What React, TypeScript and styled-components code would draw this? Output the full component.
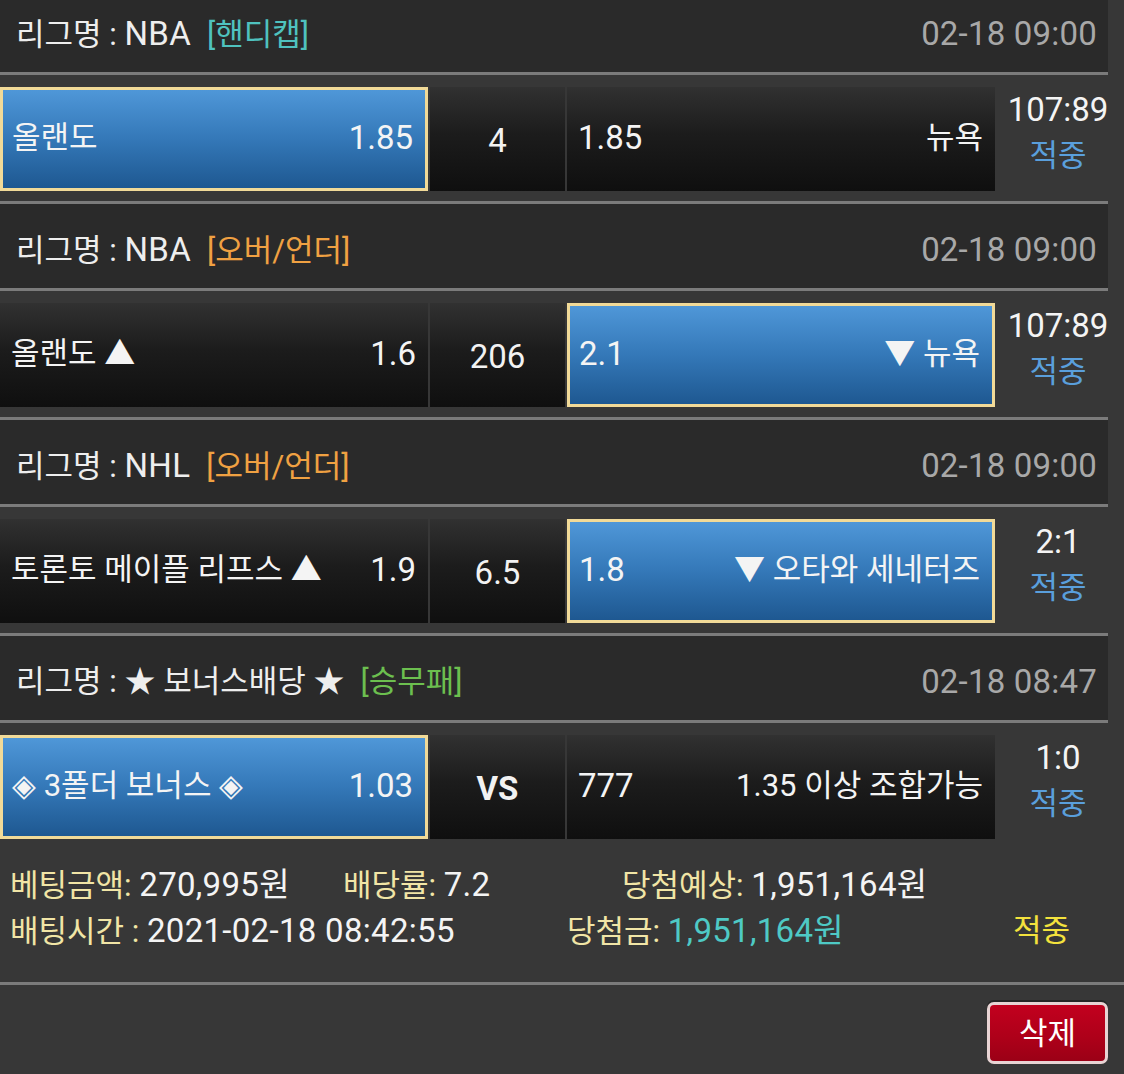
import React from "react";
import styled, { createGlobalStyle, css } from "styled-components";

const GlobalStyle = createGlobalStyle`
  html, body {
    margin: 0;
    padding: 0;
    background: #373737;
  }
  body {
    font-family: Roboto, "Noto Sans CJK KR", sans-serif;
    color: #f2f2f2;
    overflow: hidden;
  }
`;

const Page = styled.div`
  width: 1124px;
  margin-top: -12px;
  font-size: 31px;
`;

const LeagueHeader = styled.div`
  width: 1108px;
  height: 84px;
  box-sizing: border-box;
  padding: 6px 11px 0 16px;
  background: #2a2a2a;
  display: flex;
  align-items: center;
  justify-content: space-between;
  line-height: 1;
`;

const LeagueName = styled.span`
  color: #eeeeee;
  white-space: pre;
`;

const Latin = styled.span`
  font-size: 33px;
  letter-spacing: 0.3px;
`;

const tagColors: Record<string, string> = {
  handicap: "#4fc2bf",
  overunder: "#f0a142",
  winlose: "#6cbf4f",
};

const Tag = styled.span<{ $kind: string }>`
  color: ${(p) => tagColors[p.$kind]};
  margin-left: 16px;
`;

const Time = styled.span`
  color: #a8a8a8;
  font-size: 33px;
  letter-spacing: 0.2px;
`;

const Divider = styled.div<{ $full?: boolean }>`
  height: 3px;
  width: ${(p) => (p.$full ? "1124px" : "1108px")};
  background: #7b7b7b;
`;

const BetRow = styled.div`
  display: grid;
  grid-template-columns: 428px 135px 428px 1fr;
  column-gap: 2px;
  padding: 12px 0 10px;
  height: 104px;
  line-height: 1;
`;

const Pick = styled.div<{ $selected?: boolean }>`
  display: flex;
  align-items: center;
  justify-content: space-between;
  box-sizing: border-box;
  white-space: nowrap;
  color: #f4f4f4;
  ${(p) =>
    p.$selected
      ? css`
          border: 3px solid #f1da98;
          padding: 0 12px 4px 9px;
          background: linear-gradient(180deg, #4f97d8 0%, #3478b8 50%, #1e5891 100%);
        `
      : css`
          padding: 0 12px 4px 11px;
          background: linear-gradient(180deg, #313131 0%, #1c1c1c 45%, #0f0f0f 100%);
        `}
`;

const Odds = styled.span`
  font-size: 33px;
`;

const Handicap = styled.div<{ $bold?: boolean }>`
  display: flex;
  align-items: center;
  justify-content: center;
  padding-top: 2px;
  box-sizing: border-box;
  font-size: 33px;
  background: linear-gradient(180deg, #313131 0%, #1c1c1c 45%, #0f0f0f 100%);
  font-weight: ${(p) => (p.$bold ? 700 : 400)};
`;

const Result = styled.div`
  display: flex;
  flex-direction: column;
  align-items: center;
  justify-content: center;
  padding: 0 5px 12px 0;
  line-height: 46px;
`;

const Score = styled.span`
  color: #f4f4f4;
  font-size: 33px;
`;

const Hit = styled.span`
  color: #5a9fdc;
`;

const Info = styled.div`
  padding: 13px 10px 28px;
  line-height: 45px;
`;

const InfoLine = styled.div`
  display: flex;
`;

const InfoItem = styled.div<{ $w?: number }>`
  width: ${(p) => (p.$w ? `${p.$w}px` : "auto")};
  white-space: pre;
`;

const Label = styled.span`
  color: #f1e5a6;
`;

const Value = styled.span<{ $tone?: "teal" }>`
  color: ${(p) => (p.$tone === "teal" ? "#4ec9c5" : "#f4f4f4")};
  font-size: 33px;
  letter-spacing: 0.3px;
`;

const Status = styled.span`
  color: #f3e23d;
`;

const ButtonBar = styled.div`
  display: flex;
  justify-content: flex-end;
  padding: 17px 16px 13px;
`;

const DeleteButton = styled.button`
  width: 121px;
  height: 62px;
  box-sizing: border-box;
  border: 3px solid #e8d4d4;
  border-radius: 7px;
  background: linear-gradient(180deg, #c2001e 0%, #ad0019 60%, #9b0016 100%);
  color: #ffffff;
  font-family: Roboto, "Noto Sans CJK KR", sans-serif;
  font-size: 31px;
  line-height: 1;
  padding: 0;
  box-shadow: 0 -2px 0 #262626;
`;

type Game = {
  code: string;
  latinCode: boolean;
  tag: string;
  tagKind: string;
  time: string;
  home: string;
  homeOdds: string;
  mid: string;
  midBold?: boolean;
  awayOdds: string;
  away: string;
  pick: "home" | "away";
  score: string;
};

const games: Game[] = [
  {
    code: "NBA",
    latinCode: true,
    tag: "[핸디캡]",
    tagKind: "handicap",
    time: "02-18 09:00",
    home: "올랜도",
    homeOdds: "1.85",
    mid: "4",
    awayOdds: "1.85",
    away: "뉴욕",
    pick: "home",
    score: "107:89",
  },
  {
    code: "NBA",
    latinCode: true,
    tag: "[오버/언더]",
    tagKind: "overunder",
    time: "02-18 09:00",
    home: "올랜도 ▲",
    homeOdds: "1.6",
    mid: "206",
    awayOdds: "2.1",
    away: "▼ 뉴욕",
    pick: "away",
    score: "107:89",
  },
  {
    code: "NHL",
    latinCode: true,
    tag: "[오버/언더]",
    tagKind: "overunder",
    time: "02-18 09:00",
    home: "토론토 메이플 리프스 ▲",
    homeOdds: "1.9",
    mid: "6.5",
    awayOdds: "1.8",
    away: "▼ 오타와 세네터즈",
    pick: "away",
    score: "2:1",
  },
  {
    code: "★ 보너스배당 ★",
    latinCode: false,
    tag: "[승무패]",
    tagKind: "winlose",
    time: "02-18 08:47",
    home: "◈ 3폴더 보너스 ◈",
    homeOdds: "1.03",
    mid: "VS",
    midBold: true,
    awayOdds: "777",
    away: "1.35 이상 조합가능",
    pick: "home",
    score: "1:0",
  },
];

export default function App() {
  return (
    <>
      <GlobalStyle />
      <Page>
        {games.map((g, i) => (
          <React.Fragment key={i}>
            {i > 0 && <Divider />}
            <LeagueHeader>
              <span>
                <LeagueName>
                  {"리그명 : "}
                  {g.latinCode ? <Latin>{g.code}</Latin> : g.code}
                </LeagueName>
                <Tag $kind={g.tagKind}>{g.tag}</Tag>
              </span>
              <Time>{g.time}</Time>
            </LeagueHeader>
            <Divider />
            <BetRow>
              <Pick $selected={g.pick === "home"}>
                <span>{g.home}</span>
                <Odds>{g.homeOdds}</Odds>
              </Pick>
              <Handicap $bold={g.midBold}>{g.mid}</Handicap>
              <Pick $selected={g.pick === "away"}>
                <Odds>{g.awayOdds}</Odds>
                <span>{g.away}</span>
              </Pick>
              <Result>
                <Score>{g.score}</Score>
                <Hit>적중</Hit>
              </Result>
            </BetRow>
          </React.Fragment>
        ))}
        <Info>
          <InfoLine>
            <InfoItem $w={333}>
              <Label>베팅금액: </Label>
              <Value>270,995원</Value>
            </InfoItem>
            <InfoItem $w={279}>
              <Label>배당률: </Label>
              <Value>7.2</Value>
            </InfoItem>
            <InfoItem>
              <Label>당첨예상: </Label>
              <Value>1,951,164원</Value>
            </InfoItem>
          </InfoLine>
          <InfoLine>
            <InfoItem $w={557}>
              <Label>배팅시간 : </Label>
              <Value>2021-02-18 08:42:55</Value>
            </InfoItem>
            <InfoItem $w={446}>
              <Label>당첨금: </Label>
              <Value $tone="teal">1,951,164원</Value>
            </InfoItem>
            <InfoItem>
              <Status>적중</Status>
            </InfoItem>
          </InfoLine>
        </Info>
        <Divider $full />
        <ButtonBar>
          <DeleteButton>삭제</DeleteButton>
        </ButtonBar>
      </Page>
    </>
  );
}
